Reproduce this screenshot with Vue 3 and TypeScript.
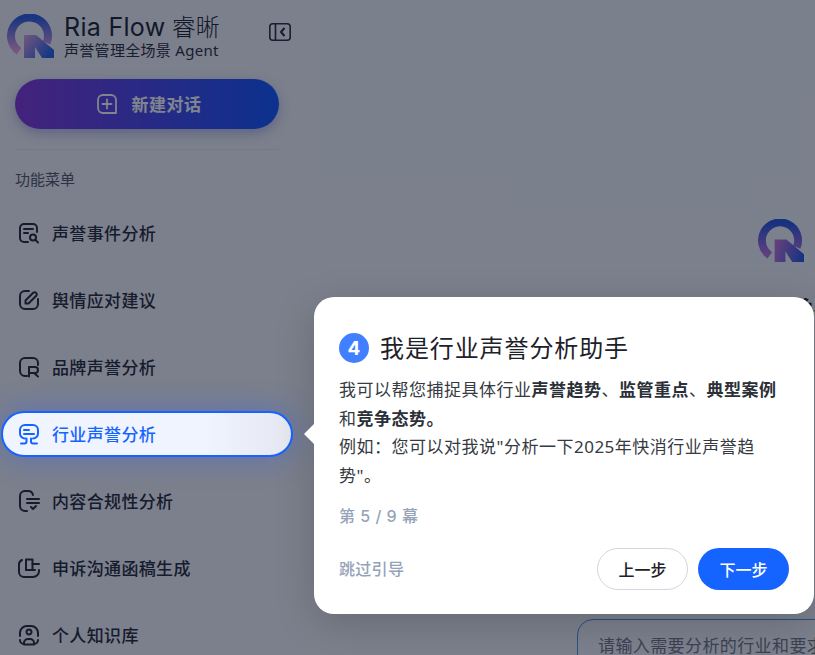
<script setup lang="ts">
interface MenuItem { label: string; active?: boolean; paths: string[] }
const items: MenuItem[] = [
  { label: '声誉事件分析', paths: ['M10 20H6a4 4 0 0 1-4-4V6a4 4 0 0 1 4-4h9a4 4 0 0 1 4 4v4', 'M6 7h9', 'M6 11h4', 'M15 12.5a3 3 0 1 0 0 6a3 3 0 0 0 0-6z', 'M17.5 18l2.5 2.5'] },
  { label: '舆情应对建议', paths: ['M11 2H7a5 5 0 0 0-5 5v8a5 5 0 0 0 5 5h8a5 5 0 0 0 5-5v-5', 'M7.5 14.5v-3l8-8a2.2 2.2 0 0 1 3 3l-8 8z'] },
  { label: '品牌声誉分析', paths: ['M9 20H7a5 5 0 0 1-5-5V7a5 5 0 0 1 5-5h8a5 5 0 0 1 5 5v2', 'M11 20.5V11h6a3 3 0 0 1 0 6h-6', 'M16 17l4 3.5'] },
  { label: '行业声誉分析', active: true, paths: ['M7 15.5a5 5 0 0 1-5-5V7a5 5 0 0 1 5-5h8a5 5 0 0 1 5 5v3.5a5 5 0 0 1-5 5', 'M6 7h5', 'M6 11h10', 'M8.5 15.5v3a2 2 0 0 1-2 2H3', 'M13 15.5v3a2 2 0 0 0 2 2h4'] },
  { label: '内容合规性分析', paths: ['M9 21H7a5 5 0 0 1-5-5V6a5 5 0 0 1 5-5h3a5 5 0 0 1 5 4', 'M9 9h12', 'M9 13h12', 'M13 17l2 2l3-3'] },
  { label: '申诉沟通函稿生成', paths: ['M4 3a5 5 0 0 0-3 5v7a5 5 0 0 0 5 5h9a6 6 0 0 0 6-6v-1', 'M8 13V2.5h6.5V13', 'M14.5 7H21', 'M8 13h9'] },
  { label: '个人知识库', paths: ['M2 12V9a7 7 0 0 1 7-7h4a7 7 0 0 1 7 7v3', 'M6 20a4 4 0 0 1-4-4', 'M16 20a4 4 0 0 0 4-4', 'M11 5.5a2.5 2.5 0 1 0 0 5a2.5 2.5 0 0 0 0-5z', 'M6 20v-1a4 4 0 0 1 4-4h2a4 4 0 0 1 4 4v1', 'M6 20.5h10'] }
]
</script>

<template>
  <div class="page">
    <aside class="sidebar">
      <header class="brand">
        <svg class="logo" viewBox="0 0 48 45" width="48" height="45">
          <defs>
            <linearGradient id="ring" x1="0" y1="0" x2="0" y2="1">
              <stop offset="0" stop-color="#2458e0" />
              <stop offset="1" stop-color="#ee9fe0" />
            </linearGradient>
            <linearGradient id="arm" x1="0" y1="0" x2="1" y2="0.6">
              <stop offset="0" stop-color="#e6a0e0" />
              <stop offset="1" stop-color="#1f5ce8" />
            </linearGradient>
          </defs>
          <path d="M12 37.2A18.5 18.5 0 1 1 39.6 29" fill="none" stroke="url(#ring)" stroke-width="8" />
          <path d="M17 21h12l18 15v8H35L28 33v11H17z" fill="url(#arm)" />
        </svg>
        <div class="brand-text">
          <div class="brand-name">Ria Flow <span class="brand-cn">睿晰</span></div>
          <div class="brand-sub">声誉管理全场景 Agent</div>
        </div>
        <svg class="collapse" viewBox="0 0 22 18" width="22" height="18" fill="none" stroke="#1f2735" stroke-width="1.6">
          <rect x="0.8" y="0.8" width="20.4" height="16.4" rx="3" />
          <path d="M6.5 1v16" />
          <path d="M15 5.5l-3 3.5l3 3.5" stroke-width="2" stroke-linecap="round" stroke-linejoin="round" />
        </svg>
      </header>

      <button class="new-chat">
        <svg viewBox="0 0 22 22" width="22" height="22" fill="none" stroke="#fff" stroke-width="1.8" stroke-linecap="round">
          <path d="M20 20H7a5 5 0 0 1-5-5V7a5 5 0 0 1 5-5h8a5 5 0 0 1 5 5z" stroke-linejoin="round" />
          <path d="M6.5 11h9" />
          <path d="M11 6.5v9" />
        </svg>
        <span class="new-chat-text">新建对话</span>
      </button>

      <div class="divider"></div>
      <div class="section-label">功能菜单</div>

      <nav class="menu">
        <div v-for="item in items" :key="item.label" class="menu-item" :class="{ active: item.active }">
          <svg viewBox="0 0 22 22" width="22" height="22" fill="none" stroke="currentColor" stroke-width="2" stroke-linecap="round" stroke-linejoin="round">
            <path v-for="d in item.paths" :key="d" :d="d" />
          </svg>
          <span class="menu-text">{{ item.label }}</span>
        </div>
      </nav>
    </aside>

    <main class="main">
      <div class="hero">
        <svg viewBox="0 0 48 45" width="47" height="44">
          <defs>
            <linearGradient id="ring2" x1="0" y1="0" x2="0" y2="1">
              <stop offset="0" stop-color="#1f50e0" />
              <stop offset="1" stop-color="#c070e0" />
            </linearGradient>
            <linearGradient id="arm2" x1="0" y1="0.5" x2="1" y2="0.7">
              <stop offset="0" stop-color="#c070d8" />
              <stop offset="1" stop-color="#1f50e8" />
            </linearGradient>
          </defs>
          <path d="M12 37.2A18.5 18.5 0 1 1 39.6 29" fill="none" stroke="url(#ring2)" stroke-width="8" />
          <path d="M17 21h12l18 15v8H35L28 33v11H17z" fill="url(#arm2)" />
        </svg>
        <h1 class="hero-title">我是行业声誉分析助手</h1>
      </div>
      <div class="composer">请输入需要分析的行业和要求，我将为您生成分析报告</div>
    </main>

    <div class="overlay"></div>

    <section class="guide">
      <span class="arrow"></span>
      <h2 class="guide-title"><span class="badge">4</span><span class="guide-title-text">我是行业声誉分析助手</span></h2>
      <p class="guide-body">
        我可以帮您捕捉具体行业<b>声誉趋势</b>、<b>监管重点</b>、<b>典型案例</b>和<b>竞争态势。</b><br />例如：您可以对我说"分析一下2025年快消行业声誉趋势"。
      </p>
      <div class="progress">第 5 / 9 幕</div>
      <footer class="guide-foot">
        <span class="skip">跳过引导</span>
        <div class="actions">
          <button class="btn prev">上一步</button>
          <button class="btn next">下一步</button>
        </div>
      </footer>
    </section>
  </div>
</template>

<style>
html, body { margin: 0; overflow: hidden; }
</style>

<style scoped>
.page {
  position: relative;
  display: flex;
  width: 815px;
  height: 655px;
  overflow: hidden;
  background: #f3f6fb;
  color: #1f2735;
  font-family: "Noto Sans", "Noto Sans CJK SC", sans-serif;
}
.sidebar {
  flex: 0 0 308px;
  box-sizing: border-box;
  padding: 14px 0 0;
  background: #f5f6fa;
}
.brand {
  display: flex;
  align-items: flex-start;
  height: 65px;
  padding-left: 7px;
}
.brand-text {
  margin-left: 9px;
  width: 205px;
}
.brand-name {
  font-family: Inter, "Noto Sans CJK SC", sans-serif;
  font-size: 25px;
  font-weight: 400;
  line-height: 26px;
  letter-spacing: 0.3px;
  white-space: nowrap;
  color: #141b2b;
}
.brand-cn {
  font-size: 24px;
  font-weight: 300;
  letter-spacing: 0;
  margin-left: -1px;
}
.brand-sub {
  font-size: 15px;
  line-height: 19px;
  letter-spacing: 0.3px;
  white-space: nowrap;
}
.collapse { margin-top: 9px; }
.new-chat {
  display: flex;
  align-items: center;
  justify-content: center;
  gap: 14px;
  width: 264px;
  height: 50px;
  margin-left: 15px;
  padding: 0 0 0 3px;
  border: 0;
  border-radius: 25px;
  background: linear-gradient(90deg, #7f2fd8, #0a50ff);
  box-shadow: 0 4px 12px rgba(60, 70, 200, 0.35);
  color: #fff;
  font: 700 17px "Noto Sans CJK SC", sans-serif;
  letter-spacing: 0.5px;
}
.new-chat-text { padding-bottom: 2px; }
.divider {
  width: 264px;
  height: 1px;
  margin: 20px 0 0 15px;
  background: #e6e8ef;
}
.section-label {
  margin: 19px 0 0 15px;
  padding-bottom: 1px;
  font-size: 15px;
  line-height: 20px;
  color: #4d5462;
}
.menu {
  display: flex;
  flex-direction: column;
  gap: 21px;
  margin-top: 20px;
}
.menu-item {
  display: flex;
  align-items: center;
  gap: 12px;
  box-sizing: border-box;
  width: 292px;
  height: 46px;
  margin-left: 1px;
  padding-left: 15px;
  border: 2px solid transparent;
  border-radius: 23px;
  font-size: 17px;
  font-weight: 500;
  letter-spacing: 0.35px;
  white-space: nowrap;
  color: #1c2230;
}
.menu-text { padding-bottom: 2px; }
.menu-item.active {
  position: relative;
  z-index: 5;
  border-color: #1664ff;
  background: linear-gradient(90deg, #f0f4ff 70%, #e5e7f1);
  box-shadow: 0 0 30px rgba(45, 85, 255, 0.38);
  color: #1664ff;
}
.main {
  flex: 0 0 946px;
  position: relative;
  background: linear-gradient(180deg, #f4f7fc, #f6f8fb);
}
.hero {
  display: flex;
  flex-direction: column;
  align-items: center;
  padding-top: 219px;
}
.hero-title {
  margin: 30px 0 0;
  font-size: 32px;
  line-height: 40px;
  font-weight: 700;
  white-space: nowrap;
  color: #111;
}
.composer {
  position: absolute;
  left: 269px;
  top: 619px;
  box-sizing: border-box;
  width: 640px;
  height: 110px;
  padding: 12px 20px;
  border: 1px solid #4d8fe8;
  border-radius: 16px;
  font-size: 17px;
  letter-spacing: 0.4px;
  white-space: nowrap;
  overflow: hidden;
  color: #6f7480;
  background: #f5f8fd;
}
.overlay {
  position: absolute;
  inset: 0;
  z-index: 3;
  background: rgba(15, 23, 42, 0.53);
}
.guide {
  position: absolute;
  z-index: 6;
  left: 314px;
  top: 297px;
  box-sizing: border-box;
  width: 500px;
  height: 317px;
  padding: 34px 25px 0;
  border-radius: 20px;
  background: #fff;
  box-shadow: 0 10px 40px rgba(0, 0, 0, 0.18);
}
.arrow {
  position: absolute;
  left: -10px;
  top: 127px;
  width: 0;
  height: 0;
  border: 10px solid transparent;
  border-left: 0;
  border-right-color: #fff;
}
.guide-title {
  display: flex;
  align-items: center;
  gap: 11px;
  margin: 0;
  height: 34px;
  font-size: 24px;
  letter-spacing: 0.9px;
  font-weight: 400;
  color: #1d2129;
  font-family: "Noto Sans CJK SC", sans-serif;
}
.guide-title-text { padding-bottom: 3px; }
.badge {
  display: flex;
  align-items: center;
  justify-content: center;
  width: 30px;
  height: 30px;
  border-radius: 50%;
  background: #4080ff;
  color: #fff;
  font-family: Inter, sans-serif;
  font-size: 19px;
  font-weight: 700;
  letter-spacing: 0;
}
.guide-body {
  margin: 11px 0 0;
  width: 450px;
  font-size: 17px;
  letter-spacing: 0.5px;
  line-height: 28.5px;
  color: #363a42;
}
.guide-body b { font-weight: 700; color: #2b2f38; }
.progress {
  margin-top: 14px;
  font-family: Inter, "Noto Sans CJK SC", sans-serif;
  font-size: 16px;
  font-weight: 500;
  letter-spacing: 0.5px;
  line-height: 24px;
  color: #94a3b8;
}
.guide-foot {
  display: flex;
  align-items: center;
  justify-content: space-between;
  margin-top: 20px;
}
.skip {
  margin-bottom: 3px;
  font-size: 16px;
  font-weight: 500;
  letter-spacing: 0.3px;
  color: #94a3b8;
}
.actions { display: flex; gap: 10px; }
.btn {
  width: 91px;
  height: 42px;
  border-radius: 21px;
  font: 500 16px "Noto Sans CJK SC", sans-serif;
}
.prev { border: 1px solid #d4d7de; background: #fff; color: #1d2129; }
.next { border: 0; background: #1664ff; color: #fff; }
</style>
